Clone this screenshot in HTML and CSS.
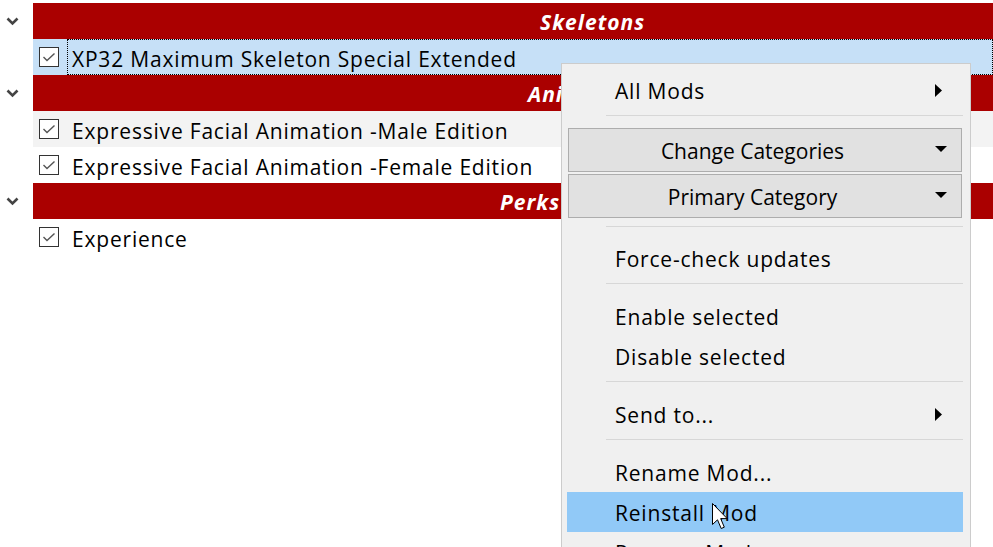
FILE: index.html
```html
<!DOCTYPE html>
<html>
<head>
<meta charset="utf-8">
<link rel="stylesheet" href="styles.css">
</head>
<body>
<div class="tree">
  <div class="mod mod-cut">
    <div class="mod-inner">
      <span class="cb"></span>
      <span class="name">Unofficial Skyrim Special Edition Patch</span>
    </div>
  </div>

  <div class="group">
    <span class="chev"><svg width="13" height="9" viewBox="0 0 13 9"><polyline points="1.5,1.5 6.5,6.5 11.5,1.5" fill="none" stroke="#444" stroke-width="2.6"/></svg></span>
    <div class="bar"><span class="bar-text t-skeletons">Skeletons</span></div>
  </div>
  <div class="mod selected">
    <span class="cb"><svg width="14" height="10" viewBox="0 0 14 10"><polyline points="1.5,5 5,8.5 12.5,1.5" fill="none" stroke="#555" stroke-width="1.4"/></svg></span>
    <span class="name focus">XP32 Maximum Skeleton Special Extended</span>
  </div>

  <div class="group">
    <span class="chev"><svg width="13" height="9" viewBox="0 0 13 9"><polyline points="1.5,1.5 6.5,6.5 11.5,1.5" fill="none" stroke="#444" stroke-width="2.6"/></svg></span>
    <div class="bar"><span class="bar-text t-animations">Animations</span></div>
  </div>
  <div class="mod alt">
    <span class="cb"><svg width="14" height="10" viewBox="0 0 14 10"><polyline points="1.5,5 5,8.5 12.5,1.5" fill="none" stroke="#555" stroke-width="1.4"/></svg></span>
    <span class="name">Expressive Facial Animation -Male Edition</span>
  </div>
  <div class="mod">
    <span class="cb"><svg width="14" height="10" viewBox="0 0 14 10"><polyline points="1.5,5 5,8.5 12.5,1.5" fill="none" stroke="#555" stroke-width="1.4"/></svg></span>
    <span class="name">Expressive Facial Animation -Female Edition</span>
  </div>

  <div class="group">
    <span class="chev"><svg width="13" height="9" viewBox="0 0 13 9"><polyline points="1.5,1.5 6.5,6.5 11.5,1.5" fill="none" stroke="#444" stroke-width="2.6"/></svg></span>
    <div class="bar"><span class="bar-text t-perks">Perks</span></div>
  </div>
  <div class="mod">
    <span class="cb"><svg width="14" height="10" viewBox="0 0 14 10"><polyline points="1.5,5 5,8.5 12.5,1.5" fill="none" stroke="#555" stroke-width="1.4"/></svg></span>
    <span class="name">Experience</span>
  </div>
</div>

<div class="menu">
  <div class="mi">
    <span>All Mods</span>
    <svg class="sub" width="7" height="13" viewBox="0 0 7 13"><polygon points="0,0 7,6.5 0,13" fill="#000"/></svg>
  </div>
  <div class="sep"></div>
  <div class="btn"><span class="btn-label">Change Categories</span><span class="btn-arrow"><span class="tri"></span></span></div>
  <div class="btn"><span class="btn-label">Primary Category</span><span class="btn-arrow"><span class="tri"></span></span></div>
  <div class="sep sep-after-btn"></div>
  <div class="mi"><span>Force-check updates</span></div>
  <div class="sep"></div>
  <div class="mi"><span>Enable selected</span></div>
  <div class="mi"><span>Disable selected</span></div>
  <div class="sep"></div>
  <div class="mi">
    <span>Send to...</span>
    <svg class="sub" width="7" height="13" viewBox="0 0 7 13"><polygon points="0,0 7,6.5 0,13" fill="#000"/></svg>
  </div>
  <div class="sep"></div>
  <div class="mi"><span>Rename Mod...</span></div>
  <div class="mi hover"><span>Reinstall Mod</span></div>
  <div class="mi"><span>Remove Mod...</span></div>
</div>

<svg class="cursor" width="16" height="27" viewBox="0 0 16 27">
  <path d="M0.5,0.5 L0.5,21.5 L5.5,16.8 L9.2,25.5 L12.3,24.2 L8.7,15.6 L15.2,15.6 Z" fill="#fff" stroke="#000" stroke-width="1" stroke-linejoin="miter"/>
</svg>
</body>
</html>
```

FILE: styles.css
```css
html, body {
  margin: 0;
  padding: 0;
}
body {
  width: 993px;
  height: 547px;
  overflow: hidden;
  background: #ffffff;
  font-family: "Open Sans", "Noto Sans", sans-serif;
  font-size: 21px;
  letter-spacing: 0.8px;
  color: #000;
  position: relative;
}

.tree {
  display: flex;
  flex-direction: column;
}

.group {
  display: flex;
  height: 36px;
}
.chev {
  width: 33px;
  flex: none;
  display: flex;
  align-items: center;
  padding-left: 6px;
  box-sizing: border-box;
}
.chev svg {
  display: block;
}
.bar {
  flex: 1;
  background: #aa0000;
  color: #fff;
  font-weight: 700;
  font-style: italic;
  letter-spacing: 1px;
  display: flex;
  align-items: center;
  white-space: nowrap;
  padding-top: 2px;
  box-sizing: border-box;
}
.t-skeletons { padding-left: 507px; }
.t-animations { padding-left: 495px; }
.t-perks { padding-left: 467px; }

.mod {
  display: flex;
  align-items: center;
  height: 36px;
  margin-left: 33px;
  padding-left: 6px;
  white-space: nowrap;
}
.mod.alt { background: #f3f3f3; }
.mod.selected { background: #c6e0f7; }

.mod-cut {
  height: 3px;
  overflow: hidden;
  align-items: flex-start;
}
.mod-inner {
  display: flex;
  align-items: center;
  height: 36px;
  margin-top: -33px;
  flex: none;
}

.cb {
  width: 20px;
  height: 20px;
  box-sizing: border-box;
  border: 1px solid #333;
  background: #fff;
  flex: none;
  display: flex;
  align-items: center;
  justify-content: center;
}
.cb svg { display: block; }

.name {
  margin-left: 8px;
  padding-left: 5px;
  padding-top: 4px;
  height: 36px;
  display: flex;
  align-items: center;
  box-sizing: border-box;
}
.name.focus {
  flex: 1;
  border: 1px dotted #000;
  padding-left: 4px;
  padding-top: 3px;
}

.menu {
  position: absolute;
  left: 561px;
  top: 63px;
  width: 410px;
  height: 520px;
  box-sizing: border-box;
  background: #f0f0f0;
  border: 1px solid #cccccc;
  padding: 6px 7px 0 5px;
  display: flex;
  flex-direction: column;
}
.mi {
  height: 40px;
  flex: none;
  display: flex;
  align-items: center;
  justify-content: space-between;
  padding-left: 48px;
  padding-right: 21px;
  white-space: nowrap;
  box-sizing: border-box;
}
.mi > span {
  padding-top: 2px;
}
.mi.hover {
  background: #91c9f7;
}
.sub { display: block; }

.sep {
  height: 1px;
  flex: none;
  background: #d7d7d7;
  margin: 5px 0 12px 39px;
}
.sep.sep-after-btn {
  margin-top: 6px;
  margin-bottom: 11px;
}

.btn {
  height: 44px;
  flex: none;
  box-sizing: border-box;
  margin: 0 1px 2px 1px;
  border: 1px solid #adadad;
  background: #e1e1e1;
  display: flex;
  align-items: center;
  white-space: nowrap;
}
.btn-label {
  flex: 1;
  text-align: center;
  letter-spacing: 0;
  padding-top: 2px;
}
.btn-arrow {
  width: 25px;
  flex: none;
  display: flex;
  align-items: center;
  margin-top: -3px;
}
.tri {
  width: 0;
  height: 0;
  margin-left: -1px;
  border-left: 6px solid transparent;
  border-right: 6px solid transparent;
  border-top: 6px solid #000;
}

.cursor {
  position: absolute;
  left: 712px;
  top: 503px;
}
```
